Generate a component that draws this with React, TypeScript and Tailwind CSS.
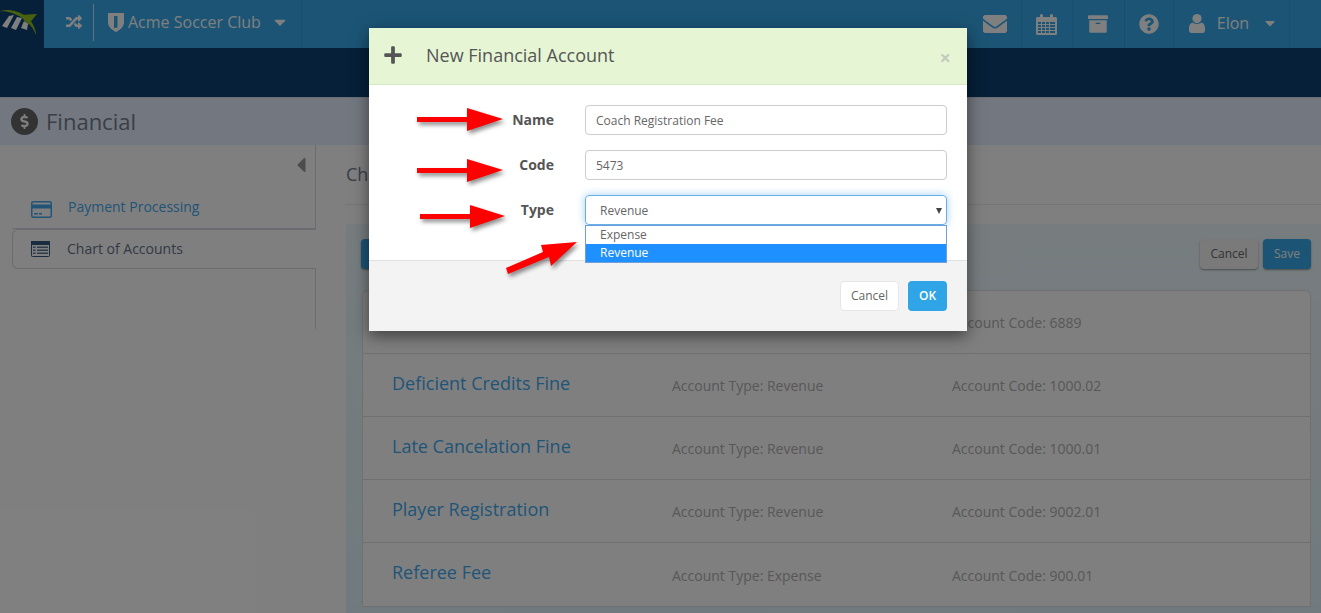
import { FaRandom, FaCaretDown, FaEnvelope, FaArchive, FaQuestionCircle, FaCaretLeft, FaPlus, FaDollarSign } from 'react-icons/fa';

const accounts = [
  { name: '', type: '', code: '6889' },
  { name: 'Deficient Credits Fine', type: 'Revenue', code: '1000.02' },
  { name: 'Late Cancelation Fine', type: 'Revenue', code: '1000.01' },
  { name: 'Player Registration', type: 'Revenue', code: '9002.01' },
  { name: 'Referee Fee', type: 'Expense', code: '900.01' },
];

function Logo() {
  return (
    <svg width="44" height="48" viewBox="0 0 44 48">
      <path d="M-2 12 C10 7 22 12 30 20 C34 25 36 31 36 35 C33 26 24 17 12 13 C6 11 2 11 -2 12Z" fill="#8fc31f" />
      <path d="M20 15 L37 14 L28 25Z" fill="#8fc31f" />
      <path d="M9 16 L14 15 L7 28 L2 26Z" fill="#fff" />
      <path d="M17 17 L22 18 L16 30 L11 28Z" fill="#fff" />
      <path d="M24 21 L28 24 L27 30 L21 28Z" fill="#fff" />
    </svg>
  );
}

function ShieldIcon() {
  return (
    <svg className="ml-[14px]" width="16" height="19" viewBox="0 0 16 19" fill="currentColor">
      <path fillRule="evenodd" d="M0 0H16V9C16 14 12 17 8 19C4 17 0 14 0 9ZM6 3V15L9.5 14.5V3Z" />
    </svg>
  );
}

function CalendarIcon() {
  return (
    <svg width="21" height="21" viewBox="0 0 21 21" fill="currentColor">
      <path fillRule="evenodd" d="M1.5 3H4V1.5C4 .6 4.6 0 5.5 0S7 .6 7 1.5V3H14V1.5C14 .6 14.6 0 15.5 0S17 .6 17 1.5V3H19.5C20.3 3 21 3.7 21 4.5V19.5C21 20.3 20.3 21 19.5 21H1.5C.7 21 0 20.3 0 19.5V4.5C0 3.7.7 3 1.5 3ZM2 8V10H5V8ZM6 8V10H9V8ZM10 8V10H13V8ZM14 8V10H19V8ZM2 11V13H5V11ZM6 11V13H9V11ZM10 11V13H13V11ZM14 11V13H19V11ZM2 14V16H5V14ZM6 14V16H9V14ZM10 14V16H13V14ZM14 14V16H19V14ZM2 17V19H5V17ZM6 17V19H9V17ZM10 17V19H13V17ZM14 17V19H19V17Z" />
    </svg>
  );
}

function UserIcon() {
  return (
    <svg width="16" height="19" viewBox="0 0 16 19" fill="currentColor">
      <circle cx="8" cy="4.6" r="4.6" />
      <path d="M3.5 8.5C5 10.4 11 10.4 12.5 8.5C14.8 9 16 11 16 14.5V16.5C16 18 15 19 13.5 19H2.5C1 19 0 18 0 16.5V14.5C0 11 1.2 9 3.5 8.5Z" />
    </svg>
  );
}

function CardIcon() {
  return (
    <svg width="21" height="17" viewBox="0 0 21 17" className="text-[#42aaf0]">
      <rect x="0.75" y="0.75" width="19.5" height="15.5" rx="1.5" fill="none" stroke="currentColor" strokeWidth="1.5" />
      <rect x="1" y="3.5" width="19" height="4" fill="currentColor" />
      <rect x="3" y="12" width="4" height="1.5" fill="currentColor" />
      <rect x="8" y="12" width="3" height="1.5" fill="currentColor" />
    </svg>
  );
}

function ListIcon() {
  return (
    <svg width="19" height="16" viewBox="0 0 19 16" className="text-[#34587f]">
      <rect x="0.5" y="0.5" width="18" height="15" rx="1" fill="none" stroke="currentColor" />
      <rect x="0" y="0" width="19" height="4" fill="currentColor" />
      {[5.5, 8.5, 11.5].map((y) => (
        <g key={y} fill="currentColor" opacity="0.8">
          <rect x="2" y={y} width="2.5" height="1.5" />
          <rect x="6" y={y} width="11" height="1.5" />
        </g>
      ))}
    </svg>
  );
}

function Arrow({ className, points, width, height }: { className: string; points: string; width: number; height: number }) {
  return (
    <svg
      className={`absolute z-30 drop-shadow-[2px_3px_2px_rgba(0,0,0,0.45)] ${className}`}
      width={width}
      height={height}
      viewBox={`0 0 ${width} ${height}`}
    >
      <polygon points={points} fill="#ff0000" />
    </svg>
  );
}

export default function App() {
  const cell = 'flex h-full items-center justify-center border-r border-[#2e9fe0]';
  return (
    <div className="relative h-screen overflow-hidden bg-white text-[14px] text-[#b0b0b0] [font-family:'Open_Sans',sans-serif]">
      {/* top bar */}
      <header className="flex h-12 bg-[#36a8ea] text-white">
        <div className="w-11 bg-[#0a4070]">
          <Logo />
        </div>
        <div className="flex h-full w-[258px] items-center border-r border-[#2e9fe0] pb-[4px]">
          <FaRandom className="ml-[22px] text-[16px]" />
          <div className="ml-[11px] h-[37px] w-px bg-white/70" />
          <ShieldIcon />
          <span className="ml-[4px] text-[16px]">Acme Soccer Club</span>
          <FaCaretDown className="ml-[10px] text-[18px]" />
        </div>
        <div className="ml-auto flex h-full pr-[31px]">
          <div className={`${cell} w-[52px] pr-px`}><FaEnvelope className="text-[24px]" /></div>
          <div className={`${cell} w-[51px] pr-px`}><CalendarIcon /></div>
          <div className={`${cell} w-[52px] pr-px`}><FaArchive className="text-[20px]" /></div>
          <div className={`${cell} w-[49px] pb-px`}><FaQuestionCircle className="text-[20px]" /></div>
          <div className={`${cell} w-[116px] pb-px pl-[5px]`}>
            <UserIcon />
            <span className="ml-3 pb-[2px] text-[16px]">Elon</span>
            <FaCaretDown className="ml-3 pb-[2px] text-[18px]" />
          </div>
        </div>
      </header>
      <div className="h-[49px] bg-[#0a4070]" />

      {/* page title */}
      <div className="flex h-[48px] items-center border-t border-[#d0d8e8] bg-[#e6eefe] pl-[11px]">
        <span className="flex h-[27px] w-[27px] items-center justify-center rounded-full bg-[#666] text-white">
          <FaDollarSign className="text-[15px]" />
        </span>
        <span className="ml-2 text-[22px] text-[#757e8e]">Financial</span>
      </div>

      <div className="flex">
        {/* sidebar */}
        <aside className="w-[316px] shrink-0">
          <div className="flex h-[45px] justify-end border-r border-[#d8d8d8] pr-[2px] pt-[8px]">
            <FaCaretLeft className="text-[24px] text-[#999]" />
          </div>
          <div className="ml-3 flex h-[39px] items-center border-r border-b border-[#d8d8e0] pl-[19px]">
            <CardIcon />
            <span className="ml-[16px] pb-[6px] text-[#42aaf0]">Payment Processing</span>
          </div>
          <div className="ml-3 flex h-[40px] items-center rounded-l-md border border-r-0 border-[#d8d8e0] pl-[18px]">
            <ListIcon />
            <span className="ml-[17px] pb-px text-[#64748b]">Chart of Accounts</span>
          </div>
          <div className="h-[60px] border-r border-[#d8d8d8]" />
        </aside>

        {/* main */}
        <main className="min-w-0 flex-1">
          <div className="ml-[29px] flex h-[60px] items-center border-b border-[#e8e8e8] pb-[1px] pl-px text-[18px] text-[#757e8e]">
            Chart of Accounts
          </div>
          <section className="ml-[30px] mt-[19px] bg-gradient-to-b from-[#eefafe] to-[#e0f4fc] pb-[40px] pl-[15px] pr-[10px] pt-[15px]">
            <div className="flex h-[30px] justify-between">
              <button className="w-[100px] rounded-sm bg-[#36a8ea] text-xs text-white shadow-[0_1px_2px_rgba(0,0,0,0.4)]">Add</button>
              <div className="flex gap-[5px]">
                <button className="w-[58px] rounded-sm bg-[#f4f4f4] text-xs text-[#666] shadow-[0_1px_2px_rgba(0,0,0,0.4)]">Cancel</button>
                <button className="w-[48px] rounded-sm bg-[#36a8ea] text-xs text-white shadow-[0_1px_2px_rgba(0,0,0,0.4)]">Save</button>
              </div>
            </div>
            <div className="ml-px mt-[21px] rounded-t-md border border-[#e0e0e0] bg-white">
              {accounts.map((a) => (
                <div key={a.code} className="flex h-[63px] items-center border-b border-[#e0e0e0] pl-[29px] last:border-b-0">
                  <div className="w-[280px] pb-[4px] text-[18px] text-[#42aaf0]">{a.name}</div>
                  <div className="w-[280px] pt-[1px]">{a.type && `Account Type: ${a.type}`}</div>
                  <div className="pt-[1px]">Account Code: {a.code}</div>
                </div>
              ))}
            </div>
          </section>
        </main>
      </div>

      {/* backdrop */}
      <div className="absolute inset-0 z-10 bg-black/50" />

      {/* dialog */}
      <div className="absolute left-[369px] top-[28px] z-20 w-[598px] shadow-[0_5px_15px_rgba(0,0,0,0.5)]">
        <div className="flex h-[57px] items-center border-b border-[#d8eac4] bg-[#e6f6d5] pb-[2px] pl-[14px] pr-[16px] text-[#555]">
          <FaPlus className="text-[20px]" />
          <span className="ml-[23px] text-[18px]">New Financial Account</span>
          <span className="ml-auto mt-[5px] text-[20px] font-bold leading-none text-[#c4cbbd]">×</span>
        </div>
        <div className="h-[175px] bg-white pt-[20px]">
          {['Name', 'Code'].map((label) => (
            <div key={label} className="mb-[15px] flex h-[30px] items-center">
              <label className="w-[185px] pb-[1px] text-right text-[14px] font-bold text-[#555]">{label}</label>
              <input
                readOnly
                value={label === 'Name' ? 'Coach Registration Fee' : '5473'}
                className="ml-[31px] h-[30px] w-[362px] rounded border border-[#ccc] px-[10px] text-[12px] text-[#666] outline-none"
              />
            </div>
          ))}
          <div className="flex h-[30px] items-center">
            <label className="w-[185px] pb-[1px] text-right text-[14px] font-bold text-[#555]">Type</label>
            <div className="relative ml-[31px] h-[30px] w-[362px]">
              <div className="flex h-[30px] items-center rounded border border-[#66afe9] pl-[14px] pt-[2px] text-[12px] text-[#666] shadow-[0_0_8px_rgba(102,175,233,0.6)]">
                Revenue
                <span className="absolute right-[5px] top-[13px] border-x-[3.5px] border-t-[6px] border-x-transparent border-t-[#444]" />
              </div>
              <div className="absolute left-0 top-[30px] z-10 w-full border border-[#6e9fd8] bg-white text-[12px] text-[#666]">
                <div className="flex h-[18px] items-center pl-[14px]">Expense</div>
                <div className="flex h-[18px] items-center bg-[#1e90ff] pl-[14px] text-white">Revenue</div>
              </div>
            </div>
          </div>
        </div>
        <div className="flex h-[71px] items-center justify-end gap-[9px] border-t border-[#e0e0e0] bg-[#f3f3f3] pr-[20px]">
          <button className="h-[30px] w-[59px] rounded-sm border border-[#e6e6e6] bg-white text-[12px] text-[#666]">Cancel</button>
          <button className="h-[30px] w-[39px] rounded-sm bg-[#2fa4e7] text-[12px] font-semibold text-white">OK</button>
        </div>
      </div>

      {/* annotation arrows */}
      <Arrow className="left-[417px] top-[108px]" width={86} height={24} points="0,9 50,9 50,0 86,11 50,23 50,14 0,14" />
      <Arrow className="left-[417px] top-[159px]" width={86} height={24} points="0,9 50,9 50,0 86,11 50,23 50,14 0,14" />
      <Arrow className="left-[420px] top-[205px]" width={86} height={24} points="0,9 50,9 50,0 85,11 50,23 50,14 0,14" />
      <Arrow className="left-[505px] top-[241px]" width={73} height={34} points="1,27 38,11 36,4 72,1 46,25 44,16 3,33" />
    </div>
  );
}
